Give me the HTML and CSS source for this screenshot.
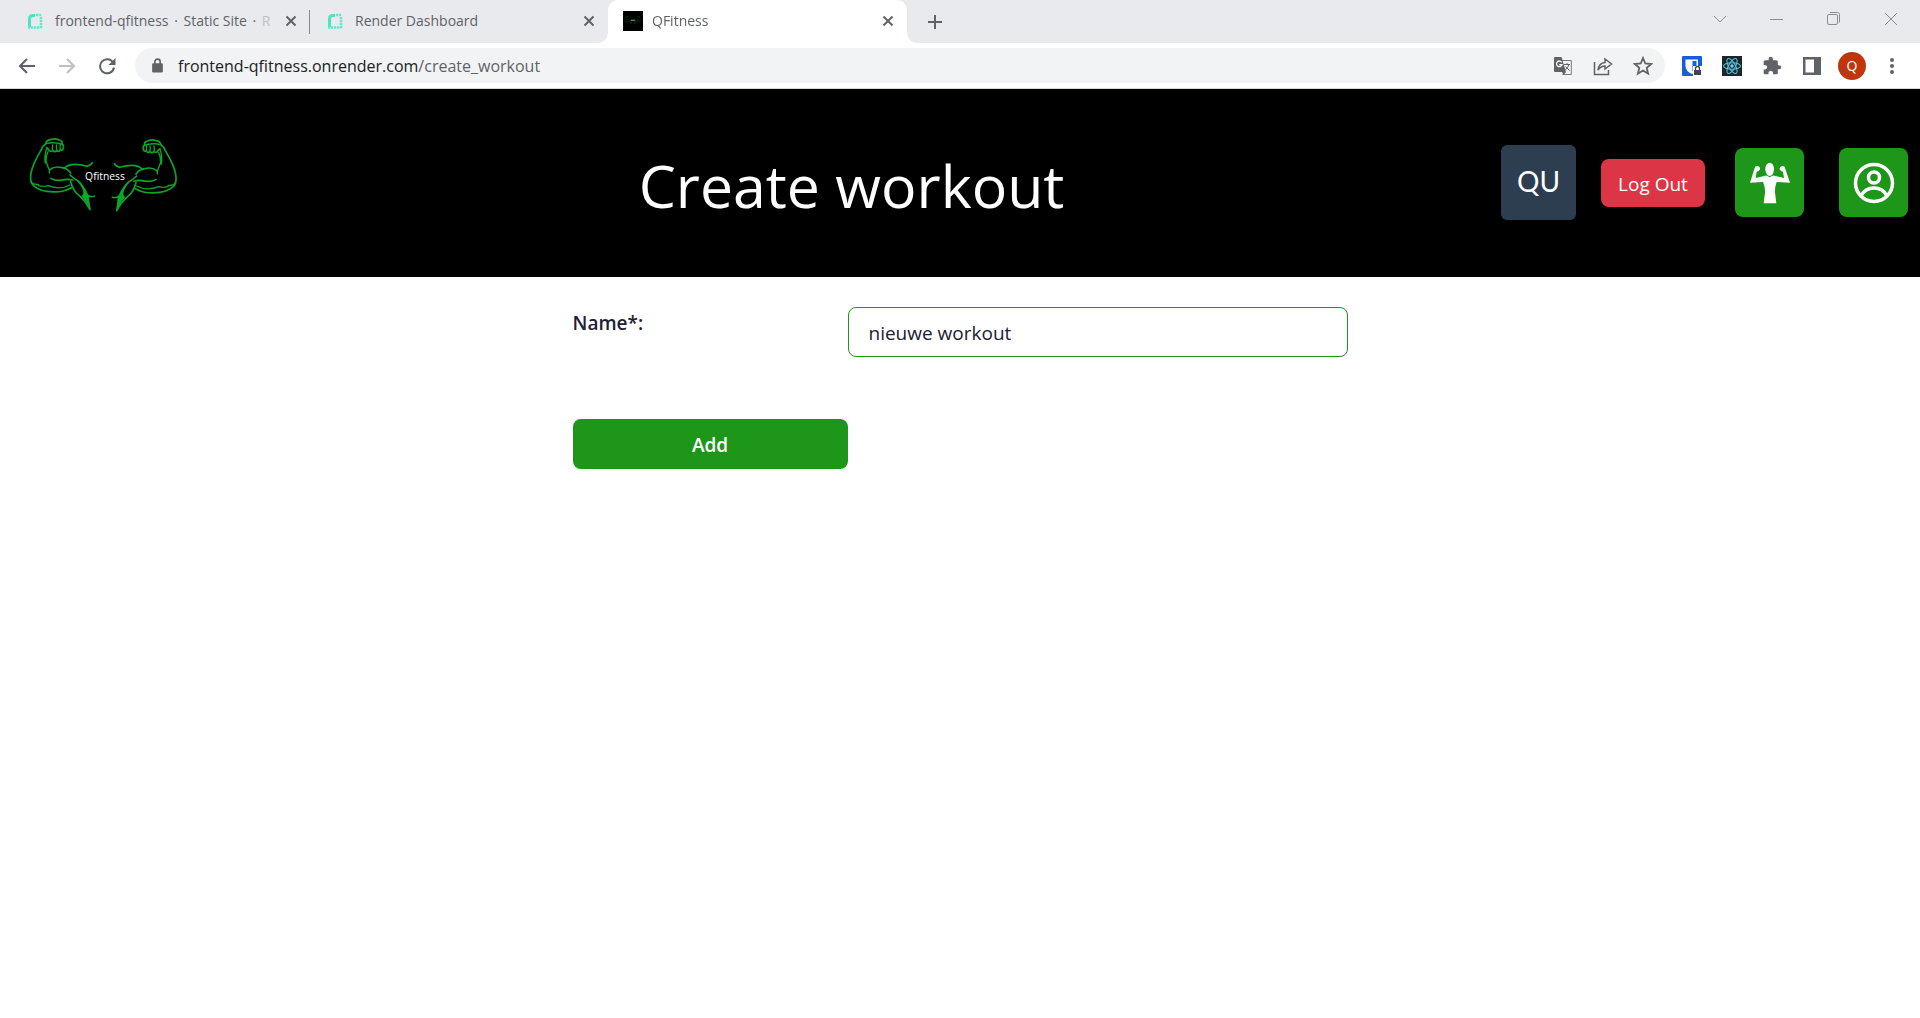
FILE: index.html
```html
<!DOCTYPE html>
<html lang="en">
<head>
<meta charset="utf-8">
<title>QFitness</title>
<link rel="stylesheet" href="styles.css">
</head>
<body>
<svg class="defs" width="0" height="0" aria-hidden="true">
  <defs>
    <symbol id="render" viewBox="0 0 16 16">
      <path d="M2.500 14V6Q2.500 2.500 6 2.500H8" fill="none" stroke="#4fe3c1" stroke-width="3"/>
      <path d="M9 2H15M14 4V16M1 14.500H13" fill="none" stroke="#5debca" stroke-width="2.500" stroke-dasharray="2.200 .8"/>
    </symbol>
    <symbol id="cross" viewBox="0 0 12 12">
      <path d="M1.500 1.500 10.500 10.500M10.500 1.500 1.500 10.500" fill="none" stroke="#5f6368" stroke-width="2"/>
    </symbol>
    <g id="arm" fill="none" stroke="#0aa52a" stroke-width="5" stroke-linecap="round" stroke-linejoin="round">
      <path d="M76 58Q80 44 94 43Q106 40 118 45Q128 48 126 56Q133 62 129 72Q127 78 121 74Q117 83 110 77Q104 83 98 77Q90 82 86 74L80 68"/>
      <path d="M80 56Q96 50 124 57M98 60Q96 68 98 76M110 60Q108 68 111 76M121 60Q119 67 121 73" stroke-width="4"/>
      <path d="M76 58Q68 62 64 74Q52 94 42 116Q30 144 32 164Q34 182 52 190Q70 200 92 200Q124 204 154 188"/>
      <path d="M84 80Q77 94 78 108L84 126Q90 134 88 144M80 70Q72 94 76 114" stroke-width="4"/>
      <path d="M90 134Q104 122 126 128Q142 130 152 144M92 160Q108 170 134 164Q146 162 158 166"/>
      <path d="M132 130Q144 118 164 118Q184 118 200 124Q212 122 217 113"/>
      <path d="M33 172Q42 180 56 178M56 182Q74 186 84 182Q120 196 150 180" stroke-width="4"/>
      <path d="M150 150Q160 160 174 168Q190 182 200 208Q212 218 223 214M152 170Q160 200 180 214Q198 230 210 254Q206 234 204 214"/>
      <path d="M172 168Q196 184 206 214L210 254Q196 226 184 214Q200 204 172 168Z" fill="#0aa52a" stroke="none"/>
    </g>
  </defs>
</svg>

<div class="browser">
  <nav class="tabs" aria-label="Tabs">
    <div class="tab tab-first">
      <svg class="favicon"><use href="#render"/></svg>
      <span class="tab-title">frontend-qfitness <span class="dot">·</span> Static Site <span class="dot">·</span> <span class="faded">R</span></span>
      <button class="tab-close" aria-label="Close tab"><svg width="12" height="12"><use href="#cross"/></svg></button>
    </div>
    <div class="tab">
      <svg class="favicon"><use href="#render"/></svg>
      <span class="tab-title">Render Dashboard</span>
      <button class="tab-close" aria-label="Close tab"><svg width="12" height="12"><use href="#cross"/></svg></button>
    </div>
    <div class="tab tab-active">
      <svg class="favicon favicon-large" viewBox="0 0 510 510"><path d="M0 0H510V510H0Z"/><g opacity=".6" transform="translate(0 80)"><use href="#arm"/><use href="#arm" transform="translate(502 3) scale(-1 1)"/></g><path d="M200 235H310" stroke="#999" stroke-width="26"/></svg>
      <span class="tab-title">QFitness</span>
      <button class="tab-close" aria-label="Close tab"><svg width="12" height="12"><use href="#cross"/></svg></button>
    </div>
    <button class="new-tab" aria-label="New tab"><svg width="16" height="16" viewBox="0 0 16 16"><path d="M8 1V15M1 8H15" stroke="#5f6368" stroke-width="2"/></svg></button>
    <div class="window-controls">
      <button aria-label="Search tabs"><svg viewBox="0 0 14 14"><path d="M1 4 7 10 13 4"/></svg></button>
      <button aria-label="Minimize"><svg viewBox="0 0 14 14"><path d="M0 7.500H13"/></svg></button>
      <button aria-label="Restore"><svg viewBox="0 0 14 14"><rect x=".5" y="2.500" width="10" height="10" rx="1.500"/><path d="M3 .5H10.500Q12.500 .5 12.500 2.500V10.500"/></svg></button>
      <button aria-label="Close"><svg viewBox="0 0 14 14"><path d="M1 1 13 13M13 1 1 13"/></svg></button>
    </div>
  </nav>

  <div class="toolbar">
    <button class="tool" aria-label="Back"><svg width="18" height="18" viewBox="0 0 18 18"><path d="M17 9H2M9 2 2 9 9 16" fill="none" stroke="#5f6368" stroke-width="2"/></svg></button>
    <button class="tool" aria-label="Forward"><svg width="18" height="18" viewBox="0 0 18 18"><path d="M1 9H16M9 2 16 9 9 16" fill="none" stroke="#bdc0c4" stroke-width="2"/></svg></button>
    <button class="tool" aria-label="Reload"><svg width="18" height="18" viewBox="0 0 18 18"><path d="M15 5.500A7 7 0 1 0 16 10.500" fill="none" stroke="#5f6368" stroke-width="2"/><path d="M17.500 1V8H10.500Z" fill="#5f6368"/></svg></button>
    <div class="omnibox">
      <svg class="lock" viewBox="0 0 12 14"><rect x="1" y="5" width="10" height="8.500" rx="1" fill="#5f6368"/><path d="M3.500 6V3.500a2.500 2.500 0 0 1 5 0V6" fill="none" stroke="#5f6368" stroke-width="1.500"/></svg>
      <a class="url" href="#">frontend-qfitness.onrender.com<span>/create_workout</span></a>
      <button class="tool" aria-label="Translate"><svg width="20" height="20" viewBox="0 0 20 20"><path d="M9 4.500H18.300V18.500H9.500" fill="none" stroke="#777b7f"/><path d="M2 1H8.500L13 16H2Q1 16 1 15V2Q1 1 2 1Z" fill="#5f6368"/><path d="M8.700 6.300A2.800 2.800 0 1 0 9 8.700H6.300" fill="none" stroke="#fff" stroke-width="1.300"/><path d="M11 8.500H17M14 7V8.500M16 8.500Q15 12 12 14M12.500 10.500 16.500 14.500" fill="none" stroke="#5f6368"/><path d="M9 16H13L10.500 19Z" fill="#5f6368"/></svg></button>
      <button class="tool" aria-label="Share"><svg width="20" height="20" viewBox="0 0 20 20"><path d="M1.500 6V18.500H15.500V14M5 14Q6 7 12 6.500V3L18.500 8 12 13V10Q8 10 5 14Z" fill="none" stroke="#5f6368" stroke-width="1.500"/></svg></button>
      <button class="tool" aria-label="Bookmark"><svg width="20" height="20" viewBox="0 0 20 20"><path d="M10 2 12.300 7.500 18.200 8 13.700 11.900 15.100 17.700 10 14.600 4.900 17.700 6.300 11.900 1.800 8 7.700 7.500Z" fill="none" stroke="#5f6368" stroke-width="1.800"/></svg></button>
    </div>
    <div class="extensions">
      <button class="tool" aria-label="Password manager"><svg width="20" height="20" viewBox="0 0 20 20"><rect width="20" height="20" rx="1" fill="#175ddc"/><path d="M3.500 3.500H16V10Q16 15 10 18 3.500 15 3.500 10Z" fill="#fff"/><path d="M10.500 5H14.500V10Q14 13 10.500 15.500Z" fill="#175ddc"/><path d="M11 10H20V20H11Z" fill="#fff"/><path d="M12 14H19V19H12Z" fill="#444"/><path d="M13.500 14V12.500a2 2 0 0 1 4 0V14" fill="none" stroke="#444" stroke-width="1.300"/></svg></button>
      <button class="tool" aria-label="React tools"><svg width="20" height="20" viewBox="0 0 20 20"><rect width="20" height="20" fill="#20232a"/><g fill="none" stroke="#53c1de" stroke-width="1.100"><ellipse cx="10" cy="10" rx="8.500" ry="3.300"/><ellipse cx="10" cy="10" rx="8.500" ry="3.300" transform="rotate(60 10 10)"/><ellipse cx="10" cy="10" rx="8.500" ry="3.300" transform="rotate(120 10 10)"/></g><circle cx="10" cy="10" r="1.700" fill="#61dafb"/></svg></button>
      <button class="tool" aria-label="Extensions"><svg width="20" height="20" viewBox="0 0 24 24"><path fill="#5f6368" d="M20.500 11H19V7c0-1.100-.9-2-2-2h-4V3.500C13 2.120 11.880 1 10.500 1S8 2.120 8 3.500V5H4c-1.100 0-1.990.9-1.990 2v3.800H3.500c1.490 0 2.700 1.210 2.700 2.700s-1.210 2.700-2.700 2.700H2V20c0 1.100.9 2 2 2h3.800v-1.500c0-1.490 1.210-2.700 2.700-2.700 1.490 0 2.700 1.210 2.700 2.700V22H17c1.100 0 2-.9 2-2v-4h1.500c1.380 0 2.500-1.120 2.500-2.500S21.880 11 20.500 11z"/></svg></button>
      <button class="tool" aria-label="Side panel"><svg width="18" height="18" viewBox="0 0 18 18"><path d="M0 0H18V18H0ZM2.500 2.500V15.500H11V2.500Z" fill="#5f6368" fill-rule="evenodd"/></svg></button>
      <button class="tool" aria-label="Profile"><span class="avatar">Q</span></button>
      <button class="tool" aria-label="Menu"><svg width="18" height="18" viewBox="0 0 18 18" fill="#5f6368"><circle cx="9" cy="3" r="2"/><circle cx="9" cy="9" r="2"/><circle cx="9" cy="15" r="2"/></svg></button>
    </div>
  </div>
</div>

<header class="header">
  <a class="logo" href="#" aria-label="Qfitness">
    <svg width="190" height="116" viewBox="-24 0 570 348">
      <use href="#arm"/>
      <use href="#arm" transform="translate(500 3) scale(-1 1)"/>
      <text class="logo-text" x="255" y="164" text-anchor="middle">Qfitness</text>
    </svg>
  </a>
  <h1 class="title">Create workout</h1>
  <div class="actions">
    <span class="initials">QU</span>
    <button class="logout">Log Out</button>
    <button class="icon-button workouts" aria-label="Workouts">
      <svg width="40" height="42" viewBox="0 0 120 126" fill="#fff"><ellipse cx="59" cy="22" rx="13" ry="20"/><path d="M0 62 14 18Q14 12 23 12Q31 14 30 22Q27 29 20 29L17 48 43 42Q48 37 59 46Q70 37 76 42L102 48 99 29Q92 29 89 22Q88 14 96 12Q105 12 105 18L120 62 80 60Q74 76 75 92L79 124H41L45 92Q46 76 39 60Z"/></svg>
    </button>
    <button class="icon-button profile" aria-label="Profile">
      <svg width="42" height="42" viewBox="0 0 42 42" fill="none" stroke="#fff" stroke-width="3.500"><circle cx="21" cy="21" r="18.500"/><circle cx="21" cy="15.500" r="5.500"/><path d="M8 34Q12 26 21 26T34 34"/></svg>
    </button>
  </div>
</header>

<main>
  <form class="form">
    <label class="label" for="name">Name*:</label>
    <input class="input" id="name" type="text" value="nieuwe workout">
    <button class="submit" type="button">Add</button>
  </form>
</main>
</body>
</html>
```
FILE: styles.css
```css
* {
  box-sizing: border-box;
}

body {
  margin: 0;
  background: #fff;
  color: #212033;
  font-family: "Open Sans", "Noto Sans", sans-serif;
  font-size: 19px;
}

button {
  display: flex;
  align-items: center;
  justify-content: center;
  padding: 0;
  border: 0;
  background: none;
  color: inherit;
  font: inherit;
}

svg {
  display: block;
  flex: none;
}

.defs {
  position: absolute;
}

/* Browser window */
.browser {
  border-bottom: 1px solid #d5d7da;
}

.tabs {
  display: flex;
  height: 43px;
  background: #e8eaed;
}

.tab {
  display: flex;
  align-items: center;
  width: 298px;
  padding: 0 13px 1px 17px;
  color: #5f6368;
  font-size: 14px;
}

.tab-first {
  width: 310px;
  padding-left: 27px;
  background: linear-gradient(#85888c, #85888c) right 10px / 1px 24px no-repeat;
}

.tab-active {
  position: relative;
  width: 299px;
  padding-left: 15px;
  border-radius: 10px 10px 0 0;
  background: #fff;
}

.tab-active::before,
.tab-active::after {
  content: "";
  position: absolute;
  bottom: 0;
  width: 9px;
  height: 9px;
}

.tab-active::before {
  right: 100%;
  background: radial-gradient(circle at 0 0, #e8eaed 8px, #fff 9px);
}

.tab-active::after {
  left: 100%;
  background: radial-gradient(circle at 100% 0, #e8eaed 8px, #fff 9px);
}

.favicon {
  width: 16px;
  height: 16px;
  margin-right: 12px;
}

.favicon-large {
  width: 20px;
  height: 20px;
  margin-right: 9px;
}

.tab-title {
  flex: 1;
  padding-bottom: 2px;
  white-space: nowrap;
}

.dot {
  padding: 0 2px;
}

.faded {
  color: #c0c2c5;
}

.new-tab {
  width: 56px;
}

.window-controls {
  display: flex;
  margin-left: auto;
  padding: 0 1px 6px 0;
}

.window-controls button {
  width: 57px;
}

.window-controls svg {
  width: 14px;
  height: 14px;
  fill: none;
  stroke: #8b8d90;
}

.toolbar {
  display: flex;
  align-items: center;
  padding: 5px 8px 5px 7px;
}

.tool {
  width: 40px;
  height: 35px;
}

.omnibox {
  display: flex;
  flex: 1;
  align-items: center;
  margin: 0 7px 0 8px;
  padding: 0 2px 0 16px;
  border-radius: 18px;
  background: #f1f3f4;
}

.lock {
  width: 13px;
  height: 15px;
  margin-right: 14px;
}

.url {
  flex: 1;
  color: #202124;
  font-size: 16px;
  line-height: 24px;
  text-decoration: none;
}

.url span {
  color: #5f6368;
}

.extensions {
  display: flex;
}

.avatar {
  width: 28px;
  border-radius: 50%;
  background: #bf360c;
  color: #fff;
  font-size: 14px;
  line-height: 28px;
}

/* Page header */
.header {
  display: flex;
  align-items: center;
  min-height: 188px;
  padding: 0 12px;
  background: #000;
  color: #fff;
}

.logo-text {
  fill: #fff;
  font-size: 31px;
  font-weight: 500;
}

.title {
  flex: 1;
  margin: 0;
  padding-top: 4px;
  font-size: 59px;
  font-weight: 400;
  line-height: 80px;
  text-align: center;
}

.actions {
  display: flex;
  align-items: center;
  padding-bottom: 1px;
}

.initials {
  width: 75px;
  height: 75px;
  border-radius: 6px;
  background: #2c3e50;
  font-family: Lato, sans-serif;
  font-size: 28px;
  font-weight: 400;
  line-height: 72px;
  text-align: center;
}

.logout {
  width: 104px;
  height: 48px;
  margin-left: 25px;
  padding-top: 2px;
  border-radius: 8px;
  background: #dc3545;
}

.icon-button {
  width: 69px;
  height: 69px;
  border-radius: 8px;
  background: #1e961a;
}

.workouts {
  margin-left: 30px;
}

.profile {
  margin-left: 35px;
}

/* Workout form */
.form {
  display: grid;
  grid-template-columns: 275px minmax(0, 500px);
  row-gap: 62px;
  justify-content: center;
  padding: 30px 16px;
}

.label {
  font-weight: 600;
  line-height: 32px;
}

.input,
.submit {
  width: 100%;
  height: 50px;
  border-radius: 8px;
}

.input {
  padding: 2px 20px 0;
  border: 1px solid #1e961a;
  background: #fff;
  color: inherit;
  font: inherit;
  outline: none;
}

.submit {
  padding-top: 2px;
  background: #1e961a;
  color: #fff;
  font-weight: 600;
}
```
